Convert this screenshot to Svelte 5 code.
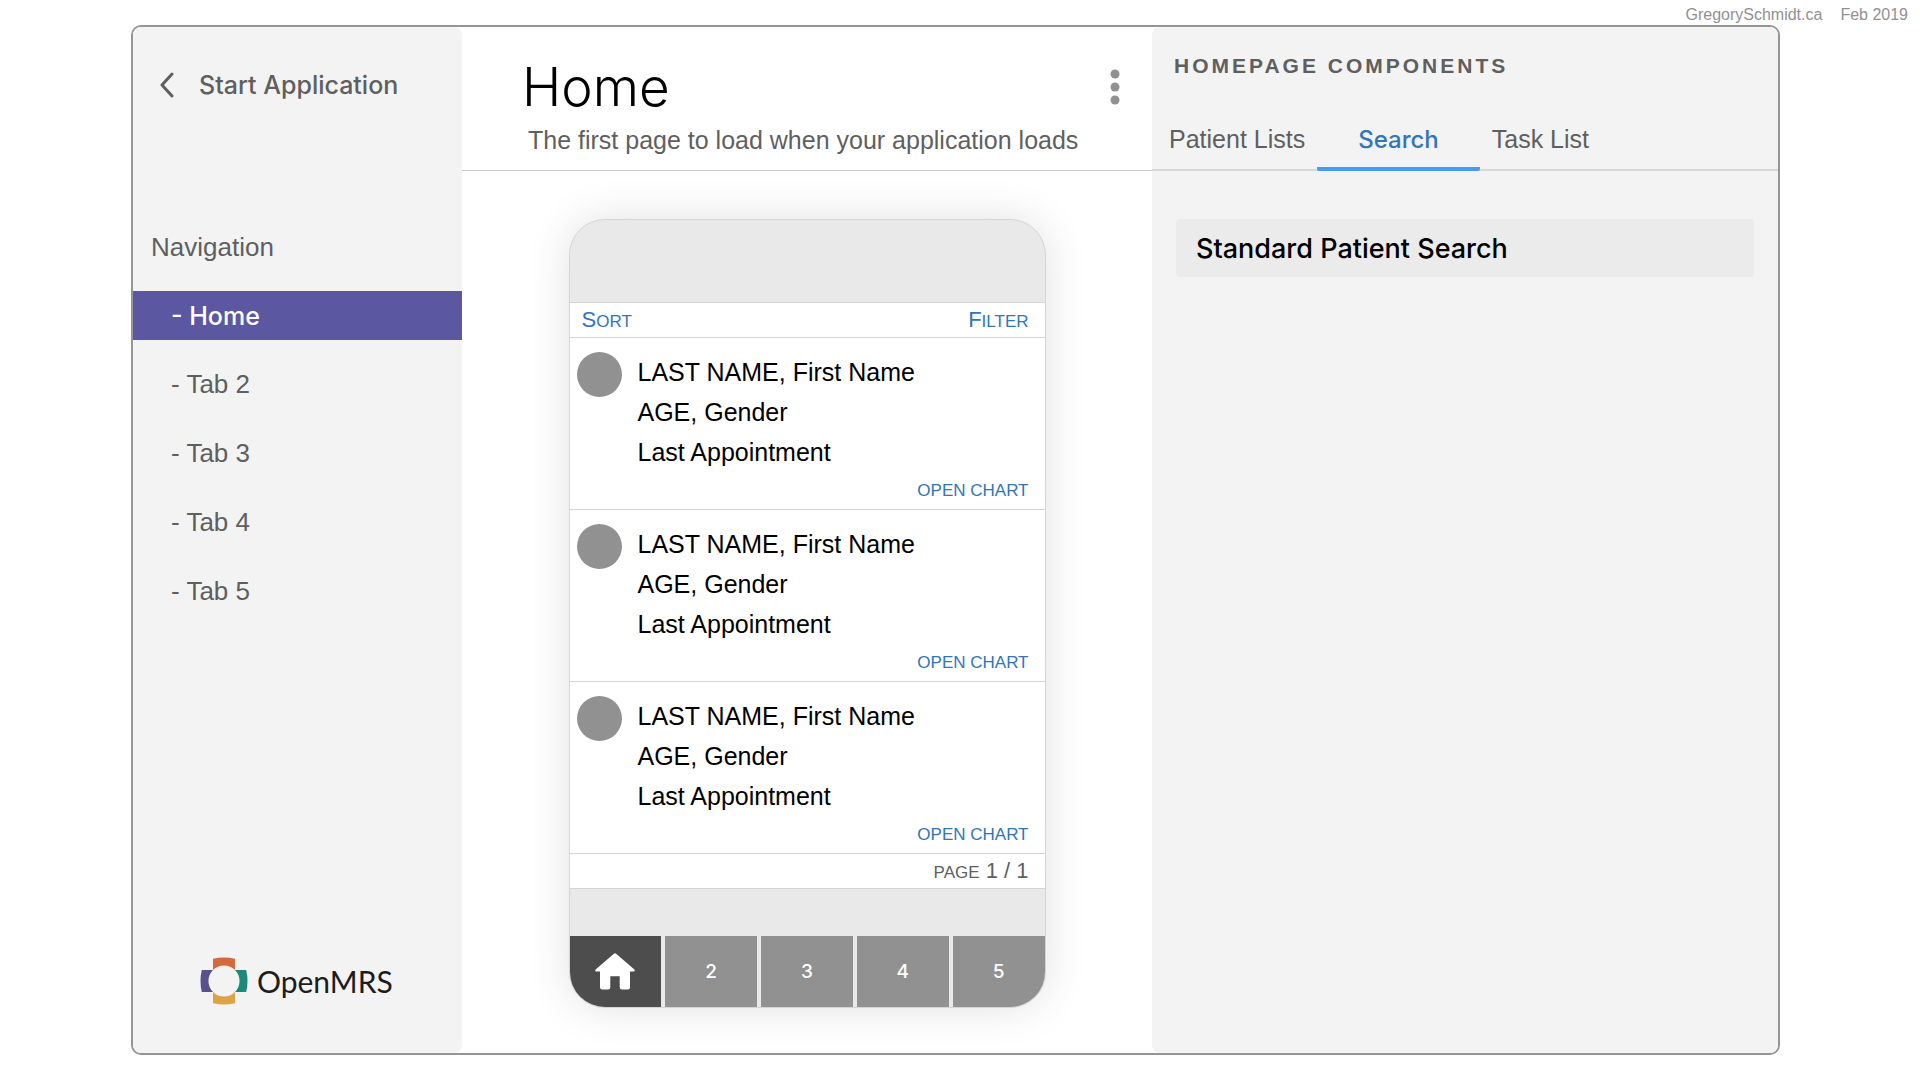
<script lang="ts">
  interface Patient {
    name: string;
    details: string;
    visit: string;
  }

  const navItems = ['Home', 'Tab 2', 'Tab 3', 'Tab 4', 'Tab 5'];
  const componentTabs = ['Patient Lists', 'Search', 'Task List'];
  const phoneTabs = [1, 2, 3, 4, 5];

  const patients: Patient[] = Array.from({ length: 3 }, () => ({
    name: 'LAST NAME, First Name',
    details: 'AGE, Gender',
    visit: 'Last Appointment'
  }));

  let activeNav = $state('Home');
  let activeTab = $state('Search');
  let activePhoneTab = $state(1);
</script>

<div class="page">
  <header class="credits">
    <span>GregorySchmidt.ca</span>
    <span>Feb 2019</span>
  </header>

  <div class="frame">
    <aside class="sidebar">
      <button class="back">
        <svg width="16" height="26" viewBox="0 0 16 26" aria-hidden="true">
          <path d="M13 2 L3 13 L13 24" fill="none" stroke="currentColor" stroke-width="3" stroke-linecap="round" stroke-linejoin="round" />
        </svg>
        Start Application
      </button>

      <h2 class="nav-title">Navigation</h2>
      <nav class="nav">
        {#each navItems as item}
          <button class="nav-item" class:active={activeNav === item} onclick={() => (activeNav = item)}>
            - {item}
          </button>
        {/each}
      </nav>

      <div class="logo">
        <svg width="48" height="48" viewBox="0 0 48 48" aria-hidden="true">
          <path d="M13 1.8 Q24 -0.8 35 1.8 V13 A15.6 15.6 0 0 0 13 13 Z" fill="#d4693a" />
          <path d="M46.2 13 Q48.8 24 46.2 35 H35 A15.6 15.6 0 0 0 35 13 Z" fill="#1c8a78" />
          <path d="M35 46.2 Q24 48.8 13 46.2 V35 A15.6 15.6 0 0 0 35 35 Z" fill="#dca446" />
          <path d="M1.8 35 Q-0.8 24 1.8 13 H13 A15.6 15.6 0 0 0 13 35 Z" fill="#58508f" />
        </svg>
        <span>OpenMRS</span>
      </div>
    </aside>

    <main class="main">
      <header class="main-header">
        <div>
          <h1>Home</h1>
          <p>The first page to load when your application loads</p>
        </div>
        <button class="more" aria-label="More options">
          <svg width="10" height="36" viewBox="0 0 10 36" aria-hidden="true">
            <circle cx="5" cy="5" r="4.5" fill="#919191" />
            <circle cx="5" cy="18" r="4.5" fill="#919191" />
            <circle cx="5" cy="31" r="4.5" fill="#919191" />
          </svg>
        </button>
      </header>

      <div class="canvas">
        <section class="phone" aria-label="Application preview">
          <div class="phone-top"></div>

          <div class="toolbar">
            <button class="caps">Sort</button>
            <button class="caps">Filter</button>
          </div>

          <ul class="patients">
            {#each patients as patient}
              <li class="patient">
                <span class="avatar"></span>
                <div class="info">
                  <p>{patient.name}</p>
                  <p>{patient.details}</p>
                  <p>{patient.visit}</p>
                </div>
                <button class="open-chart">OPEN CHART</button>
              </li>
            {/each}
          </ul>

          <div class="pager"><span>PAGE</span> 1 / 1</div>
          <div class="phone-gap"></div>

          <nav class="phone-tabs">
            {#each phoneTabs as tab}
              <button
                class:active={activePhoneTab === tab}
                aria-label={tab === 1 ? 'Home' : undefined}
                onclick={() => (activePhoneTab = tab)}
              >
                {#if tab === 1}
                  <svg width="40" height="37" viewBox="0 0 40 37" aria-hidden="true">
                    <path
                      d="M18.6 0.9 Q20 -0.3 21.4 0.9 L39.4 16.6 Q40.4 18.4 38.6 18.4 H35 V34 Q35 36.5 32.5 36.5 H27 Q24.7 36.5 24.7 34 V23.3 H15.3 V34 Q15.3 36.5 13 36.5 H7.5 Q5 36.5 5 34 V18.4 H1.4 Q-0.4 18.4 0.6 16.6 Z"
                      fill="#fff"
                    />
                  </svg>
                {:else}
                  {tab}
                {/if}
              </button>
            {/each}
          </nav>
        </section>
      </div>
    </main>

    <aside class="components">
      <header class="components-header">
        <h2>HOMEPAGE COMPONENTS</h2>
        <div class="tabs" role="tablist">
          {#each componentTabs as tab}
            <button role="tab" aria-selected={activeTab === tab} class:active={activeTab === tab} onclick={() => (activeTab = tab)}>
              {tab}
            </button>
          {/each}
        </div>
      </header>
      <button class="component-card">Standard Patient Search</button>
    </aside>
  </div>
</div>

<style>
  :global(body) {
    margin: 0;
    background: #fff;
  }

  .page {
    box-sizing: border-box;
    min-height: 100vh;
    padding: 0 140px 25px 131px;
    display: flex;
    flex-direction: column;
    font-family: 'Liberation Sans', Arial, sans-serif;
    font-size: 25px;
    color: #5f5f5f;
  }

  h1,
  h2,
  p,
  ul {
    margin: 0;
    padding: 0;
    font-weight: 400;
    list-style: none;
  }

  button {
    margin: 0;
    padding: 0;
    border: 0;
    background: none;
    color: inherit;
    font: inherit;
    text-align: left;
    cursor: pointer;
  }

  /* Credits */
  .credits {
    display: flex;
    justify-content: flex-end;
    gap: 18px;
    height: 25px;
    margin-right: -128px;
    font-size: 16px;
    line-height: 29px;
    color: #919191;
  }

  .frame {
    flex: 1;
    display: grid;
    grid-template-columns: 329px 1fr 626px;
    border: 2px solid #959595;
    border-radius: 10px;
  }

  /* Sidebar */
  .sidebar {
    display: flex;
    flex-direction: column;
    background: #f3f3f3;
    border-radius: 8px;
  }

  .back {
    display: flex;
    align-items: center;
    gap: 24px;
    margin: 40px 0 0 26px;
    height: 36px;
    font-family: Inter, sans-serif;
    font-weight: 500;
  }

  .nav-title {
    margin: 128px 0 28px 18px;
    font-size: 26px;
    line-height: 32px;
  }

  .nav {
    display: flex;
    flex-direction: column;
    gap: 20px;
    font-size: 26px;
  }

  .nav-item {
    height: 49px;
    padding-left: 38px;
  }

  .nav-item.active {
    background: #5b58a1;
    color: #fff;
    font-family: Inter, sans-serif;
    font-size: 25px;
    font-weight: 500;
  }

  .logo {
    display: flex;
    align-items: center;
    gap: 9px;
    margin: auto 0 48px 67px;
    font-family: Lato, sans-serif;
    font-size: 30px;
    line-height: 36px;
    color: #1c1c1c;
  }

  /* Main column */
  .main {
    display: flex;
    flex-direction: column;
  }

  .main-header {
    box-sizing: border-box;
    height: 144px;
    padding: 28px 32px 0 60px;
    display: flex;
    justify-content: space-between;
    border-bottom: 1px solid #c8c8c8;
  }

  h1 {
    font-family: Inter, sans-serif;
    font-size: 53px;
    font-weight: 300;
    line-height: 64px;
    color: #000;
  }

  .main-header p {
    padding-left: 6px;
    line-height: 42px;
  }

  .more {
    align-self: flex-start;
    margin-top: 14px;
  }

  .canvas {
    flex: 1;
    display: flex;
    justify-content: center;
    align-items: flex-start;
    padding: 48px 0 44px;
  }

  /* Phone preview */
  .phone {
    width: 475px;
    border: 1px solid #d5d5d5;
    border-radius: 36px;
    overflow: hidden;
    background: #e9e9e9;
    box-shadow: 0 0 44px rgba(0, 0, 0, 0.12);
  }

  .phone-top {
    height: 82px;
  }

  .toolbar {
    box-sizing: border-box;
    display: flex;
    justify-content: space-between;
    height: 35px;
    padding: 0 16px 0 12px;
    border-top: 1px solid #d5d5d5;
    background: #fff;
    color: #3275b9;
  }

  .caps {
    display: block;
    font-size: 17px;
    text-transform: uppercase;
  }

  .caps::first-letter {
    font-size: 22px;
  }

  .patient {
    position: relative;
    box-sizing: border-box;
    height: 172px;
    display: flex;
    gap: 16px;
    padding: 14px 7px;
    border-top: 1px solid #d5d5d5;
    background: #fff;
    color: #000;
  }

  .avatar {
    width: 45px;
    height: 45px;
    border-radius: 50%;
    background: #919191;
  }

  .info {
    line-height: 40px;
  }

  .open-chart {
    position: absolute;
    right: 16px;
    bottom: 8px;
    font-size: 17px;
    color: #3275b9;
  }

  .pager {
    box-sizing: border-box;
    height: 36px;
    padding-right: 16px;
    border: solid #d5d5d5;
    border-width: 1px 0;
    background: #fff;
    font-size: 22px;
    line-height: 34px;
    text-align: right;
  }

  .pager span {
    font-size: 17px;
  }

  .phone-gap {
    height: 47px;
  }

  .phone-tabs {
    display: grid;
    grid-template-columns: repeat(5, 1fr);
    gap: 4px;
    height: 71px;
  }

  .phone-tabs button {
    display: flex;
    justify-content: center;
    align-items: center;
    background: #919191;
    color: #fff;
    font-family: Inter, sans-serif;
    font-size: 19px;
    font-weight: 500;
  }

  .phone-tabs .active {
    background: #4d4d4d;
  }

  /* Components panel */
  .components {
    display: flex;
    flex-direction: column;
    background: #f3f3f3;
    border-radius: 8px;
  }

  .components-header {
    box-sizing: border-box;
    height: 144px;
    padding: 24px 0 0 17px;
    display: flex;
    flex-direction: column;
    justify-content: space-between;
    border-bottom: 2px solid #d7d7d7;
  }

  .components-header h2 {
    padding-left: 5px;
    font-size: 21px;
    font-weight: 700;
    line-height: 30px;
    letter-spacing: 3px;
  }

  .tabs {
    display: flex;
    margin-bottom: -2px;
  }

  .tabs button {
    height: 52px;
    padding: 0 12px 8px;
    border-bottom: 4px solid transparent;
    border-radius: 2px;
  }

  .tabs button:first-child {
    padding-left: 0;
  }

  .tabs .active {
    padding: 0 41px 8px;
    border-color: #459bf6;
    color: #3275b9;
    font-family: Inter, sans-serif;
    font-size: 24px;
    font-weight: 500;
  }

  .component-card {
    height: 58px;
    margin: 48px 24px 0;
    padding-left: 20px;
    border-radius: 4px;
    background: #ebebeb;
    color: #000;
    font-family: Inter, sans-serif;
    font-size: 27px;
    font-weight: 500;
  }
</style>
